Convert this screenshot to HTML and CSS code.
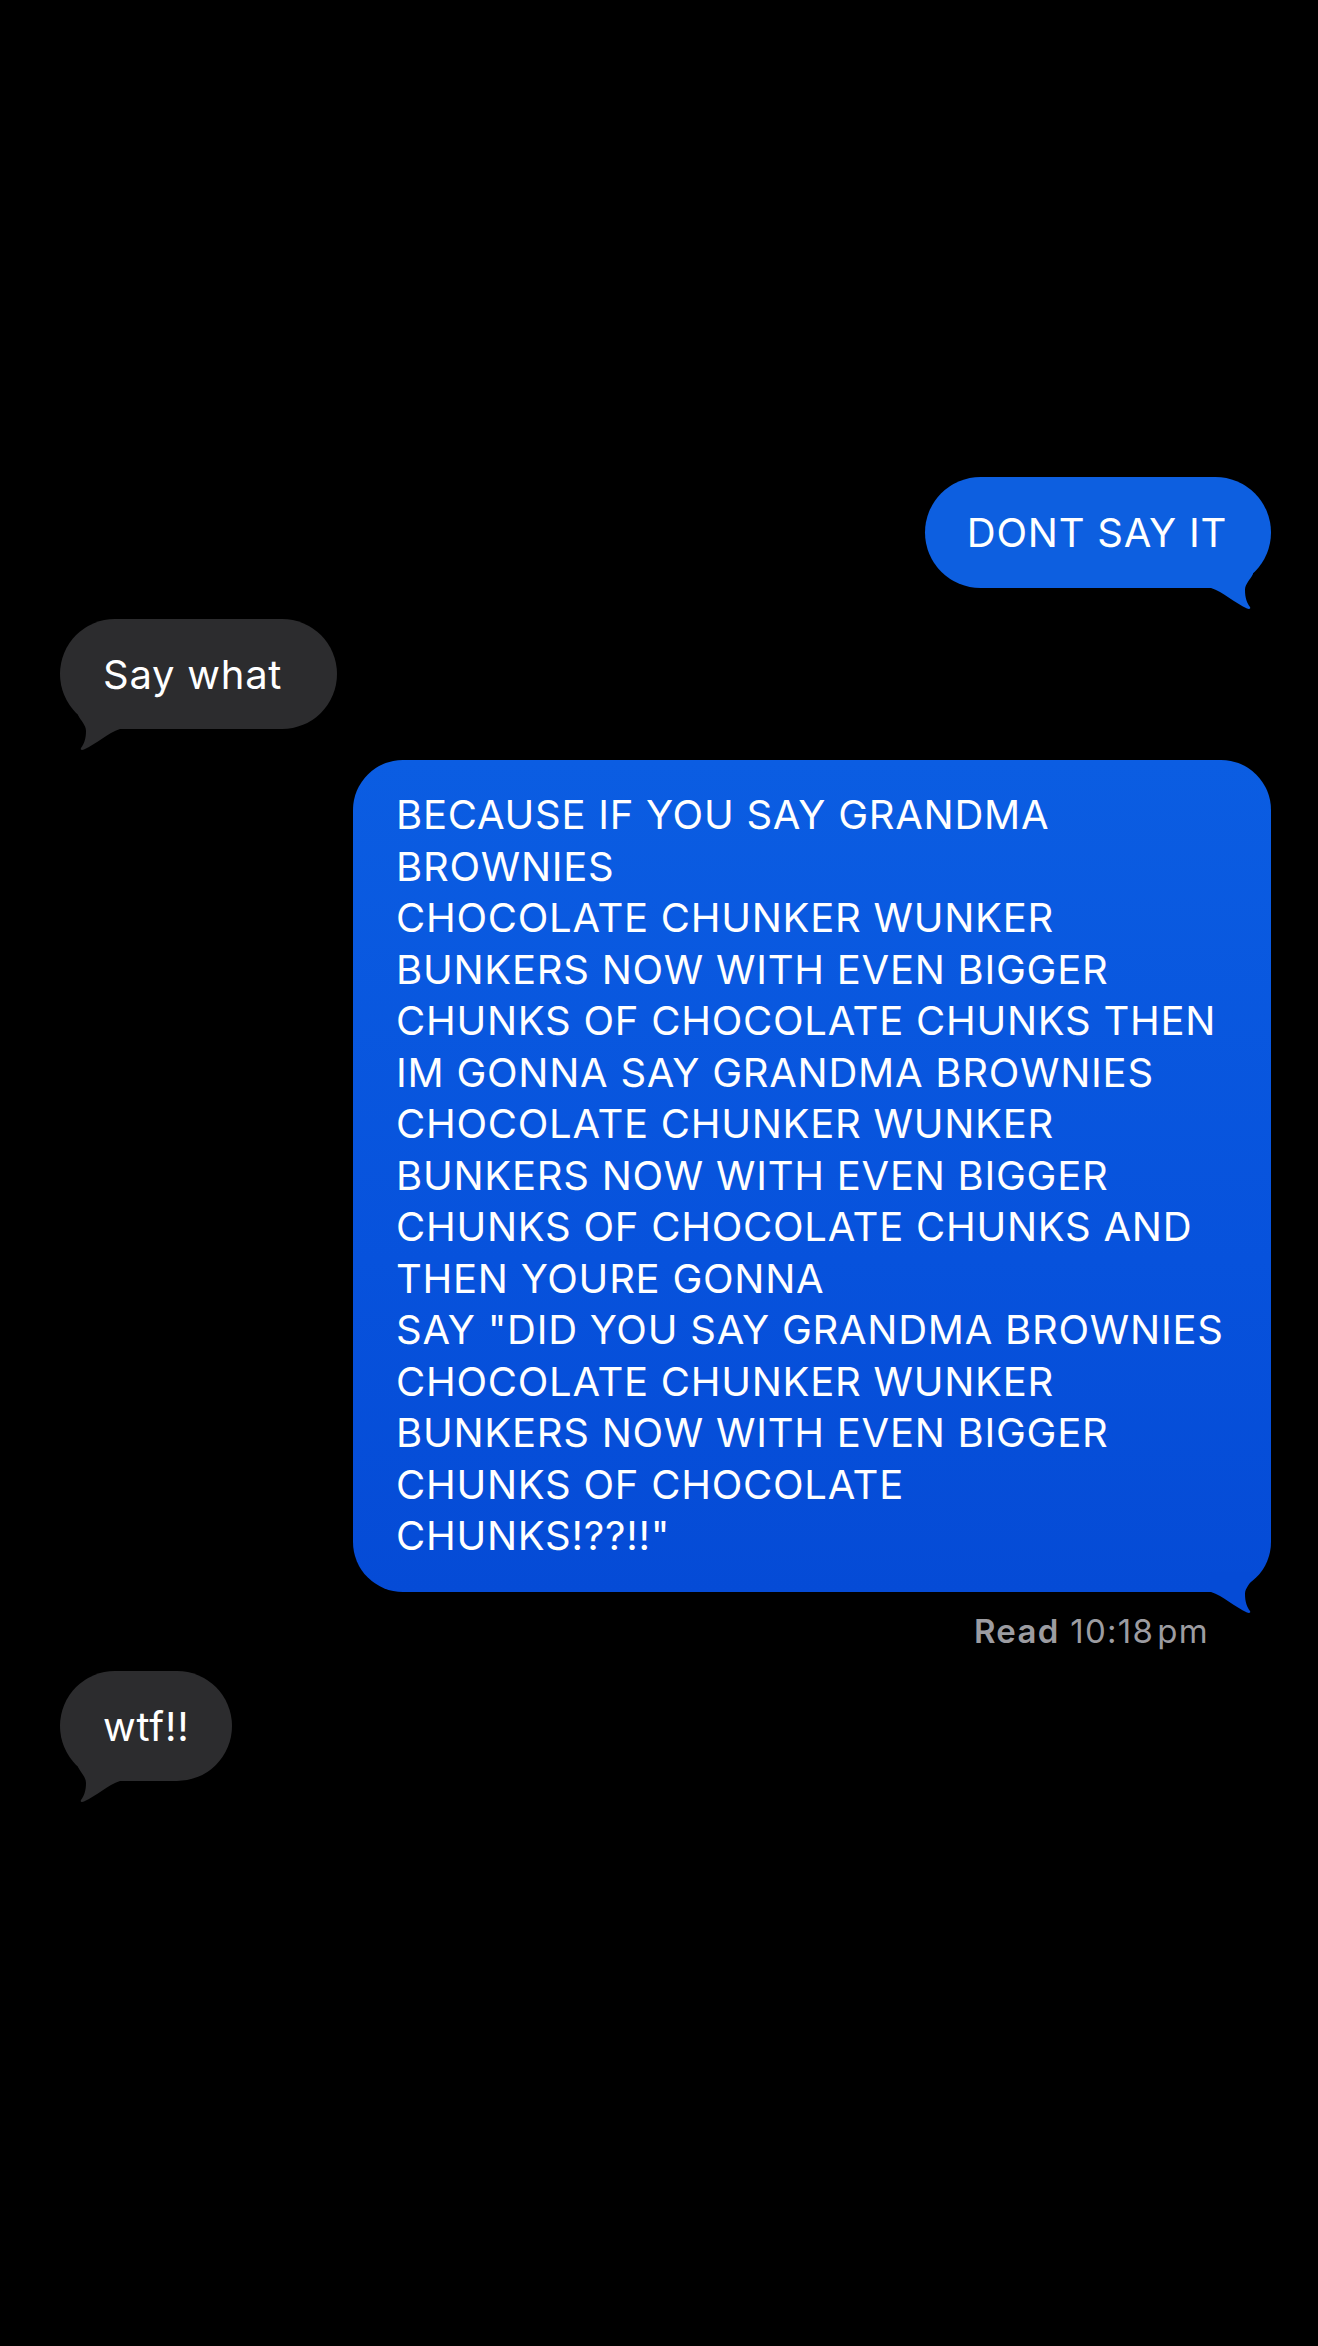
FILE: index.html
```html
<!DOCTYPE html>
<html>
<head>
<meta charset="utf-8">
<link rel="stylesheet" href="styles.css">
</head>
<body>
<div class="thread">
  <div class="row sent">
    <div class="bubble blue pill">DONT SAY IT<svg class="tail" viewBox="0 0 60 42" width="60" height="42"><path d="M42,6 C39,12 34,16 34,22 C34,30 36,35 39,39 C40,41 38,41.5 36,40.5 C24,35 12,24 0,20 L0,0 L42,0 Z"/></svg></div>
  </div>
  <div class="row recv">
    <div class="bubble gray pill">Say what&nbsp;<svg class="tail" viewBox="0 0 60 42" width="60" height="42"><path d="M42,6 C39,12 34,16 34,22 C34,30 36,35 39,39 C40,41 38,41.5 36,40.5 C24,35 12,24 0,20 L0,0 L42,0 Z"/></svg></div>
  </div>
  <div class="row sent">
    <div class="bubble blue big">BECAUSE IF YOU SAY GRANDMA<br>BROWNIES<br>CHOCOLATE CHUNKER WUNKER<br>BUNKERS NOW WITH EVEN BIGGER<br>CHUNKS OF CHOCOLATE CHUNKS THEN<br>IM GONNA SAY GRANDMA BROWNIES<br>CHOCOLATE CHUNKER WUNKER<br>BUNKERS NOW WITH EVEN BIGGER<br>CHUNKS OF CHOCOLATE CHUNKS AND<br>THEN YOURE GONNA<br>SAY "DID YOU SAY GRANDMA BROWNIES<br>CHOCOLATE CHUNKER WUNKER<br>BUNKERS NOW WITH EVEN BIGGER<br>CHUNKS OF CHOCOLATE<br>CHUNKS!??!!"<svg class="tail" viewBox="0 0 60 42" width="60" height="42"><path d="M42,6 C39,12 34,16 34,22 C34,30 36,35 39,39 C40,41 38,41.5 36,40.5 C24,35 12,24 0,20 L0,0 L42,0 Z"/></svg></div>
  </div>
  <div class="receipt"><span class="read">Read</span> 10:18<span class="thin"> </span>pm</div>
  <div class="row recv">
    <div class="bubble gray pill">wtf!!<svg class="tail" viewBox="0 0 60 42" width="60" height="42"><path d="M42,6 C39,12 34,16 34,22 C34,30 36,35 39,39 C40,41 38,41.5 36,40.5 C24,35 12,24 0,20 L0,0 L42,0 Z"/></svg></div>
  </div>
</div>
</body>
</html>
```
FILE: styles.css
```css
html, body {
  margin: 0;
  padding: 0;
  background: #000;
}
body {
  width: 1318px;
  height: 2346px;
  overflow: hidden;
  font-family: Inter, "Open Sans", "Liberation Sans", sans-serif;
  color: #fff;
}
.thread {
  display: flex;
  flex-direction: column;
  padding-top: 477px;
}
.row {
  display: flex;
}
.row.sent {
  justify-content: flex-end;
  padding-right: 47px;
}
.row.recv {
  justify-content: flex-start;
  padding-left: 60px;
}
.row + .row {
  margin-top: 31px;
}
.bubble {
  position: relative;
  font-size: 40px;
  letter-spacing: 0.75px;
  line-height: 51.5px;
  white-space: nowrap;
}
.bubble.pill {
  border-radius: 56px;
  padding: 30px 44px 29px 42px;
}
.bubble.big {
  border-radius: 50px;
  padding: 29px 46px 30px 43px;
  width: 918px;
  box-sizing: border-box;
  background: linear-gradient(180deg, #0b5de2 0%, #0752dc 60%, #054bd6 100%);
}
.blue {
  background: #0d5fe0;
}
.gray {
  background: #2c2c2e;
  padding-left: 43px !important;
  padding-right: 43px !important;
}
.tail {
  position: absolute;
  bottom: -22px;
  display: block;
}
.sent .tail {
  right: 0;
  fill: #0d5fe0;
}
.sent .big .tail {
  fill: #054bd6;
}
.recv .tail {
  left: 0;
  transform: scaleX(-1);
  fill: #2c2c2e;
}
.receipt {
  align-self: flex-end;
  margin-right: 109px;
  margin-top: 19px;
  margin-bottom: 20px;
  font-size: 33px;
  letter-spacing: 1.3px;
  line-height: 40px;
  color: #9c9ca1;
}
.receipt .read {
  font-weight: 600;
}
.receipt .thin {
  display: inline-block;
  width: 3px;
}
.receipt + .row {
  margin-top: 0;
}
```
